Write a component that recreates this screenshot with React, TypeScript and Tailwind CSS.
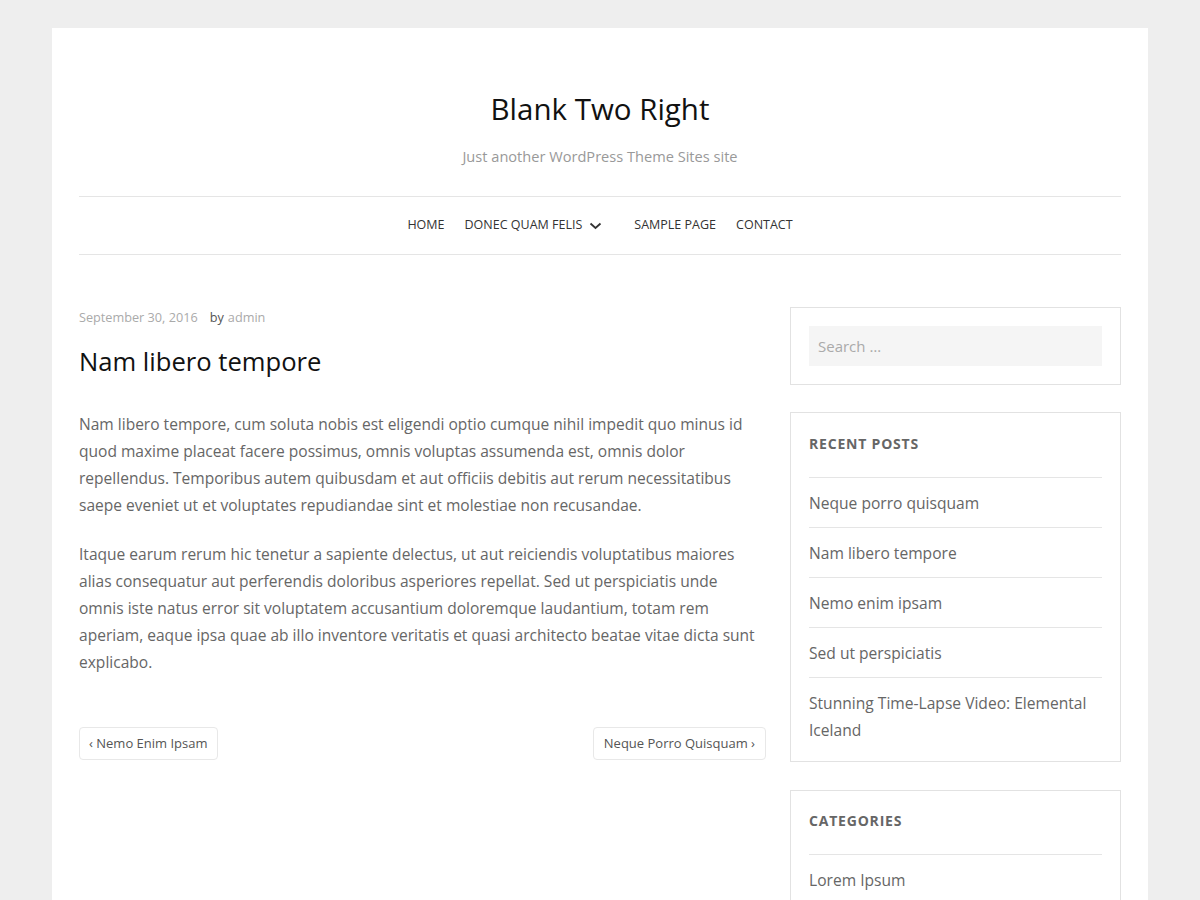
import React from "react";

const font = { fontFamily: '"Open Sans", "Noto Sans", sans-serif' };

function Chevron() {
  return (
    <svg width="13" height="10" viewBox="0 0 13 10" className="ml-[7px] mt-[1px]">
      <path d="M1.5 2.5 L6.5 7 L11.5 2.5" fill="none" stroke="#333" strokeWidth="1.8" />
    </svg>
  );
}

const recent = [
  "Neque porro quisquam",
  "Nam libero tempore",
  "Nemo enim ipsam",
  "Sed ut perspiciatis",
  "Stunning Time-Lapse Video: Elemental Iceland",
];

export default function App() {
  return (
    <div className="min-h-[900px] bg-[#eeeeee] pt-[28px]" style={font}>
      <div className="mx-auto w-[1096px] bg-white px-[27px] pb-[60px]">
        <header className="pt-[62px] text-center">
          <h1 className="text-[29.5px] leading-[38px] text-[#111]">Blank Two Right</h1>
          <p className="mt-[17px] text-[14.6px] leading-[22px] text-[#999]">
            Just another WordPress Theme Sites site
          </p>
        </header>
        <nav className="mt-[29px] flex h-[59px] items-center justify-center border-y border-[#e5e5e5] text-[12.5px] uppercase text-[#333]">
          <span className="mx-[10px]">Home</span>
          <span className="ml-[10px] mr-[22px] flex items-center">
            Donec Quam Felis
            <Chevron />
          </span>
          <span className="mx-[10px]">Sample Page</span>
          <span className="mx-[10px]">Contact</span>
        </nav>
        <div className="flex gap-[24px] pt-[52px]">
          <main className="w-[687px]">
            <div className="text-[12.7px] leading-[20px] text-[#aaa]">
              September 30, 2016<span className="ml-[12px] text-[#555]">by</span>
              <span className="ml-[4px]">admin</span>
            </div>
            <h2 className="mt-[18px] text-[25.6px] leading-[34px] text-[#111]">Nam libero tempore</h2>
            <div className="mt-[32px] text-[15.55px] leading-[27px] text-[#666]">
              <p className="mb-[22px]">
                Nam libero tempore, cum soluta nobis est eligendi optio cumque nihil impedit quo minus id quod
                maxime placeat facere possimus, omnis voluptas assumenda est, omnis dolor repellendus. Temporibus
                autem quibusdam et aut officiis debitis aut rerum necessitatibus saepe eveniet ut et voluptates
                repudiandae sint et molestiae non recusandae.
              </p>
              <p>
                Itaque earum rerum hic tenetur a sapiente delectus, ut aut reiciendis voluptatibus maiores alias
                consequatur aut perferendis doloribus asperiores repellat. Sed ut perspiciatis unde omnis iste
                natus error sit voluptatem accusantium doloremque laudantium, totam rem aperiam, eaque ipsa quae ab
                illo inventore veritatis et quasi architecto beatae vitae dicta sunt explicabo.
              </p>
            </div>
            <div className="mt-[51px] flex justify-between text-[13px] text-[#555]">
              <span className="flex h-[33px] items-center rounded-[4px] border border-[#e8e8e8] px-[9px]">
                ‹ Nemo Enim Ipsam
              </span>
              <span className="flex h-[33px] items-center rounded-[4px] border border-[#e8e8e8] px-[10px]">
                Neque Porro Quisquam ›
              </span>
            </div>
          </main>
          <aside className="w-[331px]">
            <div className="border border-[#e2e2e2] p-[18px]">
              <div className="flex h-[40px] items-center bg-[#f5f5f5] px-[9px] text-[15px] text-[#aaa]">
                Search …
              </div>
            </div>
            <div className="mt-[27px] border border-[#e2e2e2] px-[18px] pb-[7px] pt-[19px]">
              <h3 className="text-[14px] font-bold uppercase leading-[24px] tracking-[0.8px] text-[#666]">
                Recent Posts
              </h3>
              <ul className="mt-[21px]">
                {recent.map((r) => (
                  <li key={r} className="border-t border-[#e5e5e5] pb-[10px] pt-[12px] text-[15.6px] leading-[27px] text-[#666]">
                    {r}
                  </li>
                ))}
              </ul>
            </div>
            <div className="mt-[28px] border border-[#e2e2e2] px-[18px] pb-[7px] pt-[18px]">
              <h3 className="text-[14px] font-bold uppercase leading-[24px] tracking-[0.8px] text-[#666]">
                Categories
              </h3>
              <ul className="mt-[21px]">
                {["Lorem Ipsum", "Uncategorized"].map((r) => (
                  <li key={r} className="border-t border-[#e5e5e5] pb-[10px] pt-[12px] text-[15.6px] leading-[27px] text-[#666]">
                    {r}
                  </li>
                ))}
              </ul>
            </div>
          </aside>
        </div>
      </div>
    </div>
  );
}
